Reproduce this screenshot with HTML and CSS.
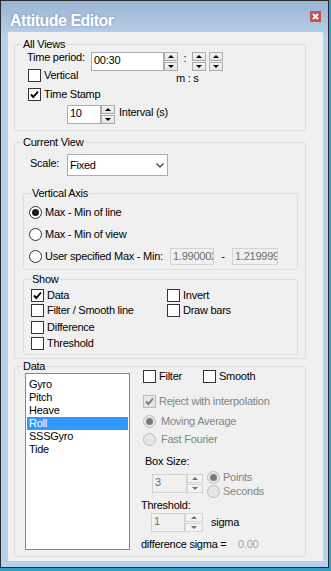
FILE: index.html
```html
<!DOCTYPE html>
<html lang="en">
<head>
  <meta charset="UTF-8" />
  <title>Attitude Editor</title>
  <link rel="stylesheet" href="styles.css">
</head>
<body>

  <div class="window">
    <div class="titlebar">
      <span class="title">Attitude Editor</span>
      <span class="close">
        <svg width="11" height="11" viewBox="0 0 11 11"><path d="M3 3L8 8M8 3L3 8" stroke="#fff" stroke-width="2"/></svg>
      </span>
    </div>

    <div class="client">

      <!-- All views -->
      <div class="group g-all">
        <div class="group-title">All Views</div>
        <div class="row r-period">
          <span class="lbl l-period">Time period:</span>
          <span class="edit e-period">00:30</span>
          <span class="spin"><i class="up"></i><i class="down"></i></span>
          <span class="colon">:</span>
          <span class="spin"><i class="up"></i><i class="down"></i></span>
          <span class="spin s-gap"><i class="up"></i><i class="down"></i></span>
        </div>
        <div class="row r-vertical">
          <label class="item i-vertical"><span class="cb"></span><span class="txt">Vertical</span></label>
          <span class="ms">m : s</span>
        </div>
        <div class="row r-stamp">
          <label class="item">
            <span class="cb"><svg width="11" height="11" viewBox="0 0 11 11"><path d="M2 5.5L4.3 8L9 2.5" fill="none" stroke-width="1.9"/></svg></span>
            <span class="txt">Time Stamp</span>
          </label>
        </div>
        <div class="row r-interval">
          <span class="edit e-interval">10</span>
          <span class="spin"><i class="up"></i><i class="down"></i></span>
          <span class="lbl l-interval">Interval (s)</span>
        </div>
      </div>

      <!-- Current view -->
      <div class="group g-current">
        <div class="group-title">Current View</div>
        <div class="row r-scale">
          <span class="lbl l-scale">Scale:</span>
          <span class="combo">
            <span>Fixed</span>
            <svg class="chev" width="8" height="5" viewBox="0 0 8 5"><path d="M0.5 0.5L4 4L7.5 0.5" fill="none" stroke="#444" stroke-width="1.3"/></svg>
          </span>
        </div>

        <div class="group g-axis">
          <div class="group-title">Vertical Axis</div>
          <div class="row r-ax1"><span class="rb on"></span><span class="txt">Max - Min of line</span></div>
          <div class="row r-ax2"><span class="rb"></span><span class="txt">Max - Min of view</span></div>
          <div class="row r-ax3">
            <span class="rb"></span><span class="txt l-user">User specified Max - Min:</span>
            <span class="edit dis e-min">1.990002</span>
            <span class="dash">-</span>
            <span class="edit dis e-max">1.219999</span>
          </div>
        </div>

        <div class="group g-show">
          <div class="group-title">Show</div>
          <div class="row r-sh1">
            <label class="item i-col">
              <span class="cb"><svg width="11" height="11" viewBox="0 0 11 11"><path d="M2 5.5L4.3 8L9 2.5" fill="none" stroke-width="1.9"/></svg></span>
              <span class="txt">Data</span>
            </label>
            <label class="item"><span class="cb"></span><span class="txt">Invert</span></label>
          </div>
          <div class="row r-sh2">
            <label class="item i-col"><span class="cb"></span><span class="txt">Filter / Smooth line</span></label>
            <label class="item"><span class="cb"></span><span class="txt">Draw bars</span></label>
          </div>
          <div class="row r-sh3">
            <label class="item"><span class="cb"></span><span class="txt">Difference</span></label>
          </div>
          <div class="row r-sh4">
            <label class="item"><span class="cb"></span><span class="txt">Threshold</span></label>
          </div>
        </div>
      </div>

      <!-- Data -->
      <div class="group g-data">
        <div class="group-title">Data</div>
        <div class="data-body">
          <div class="listbox">
            <div class="li">Gyro</div>
            <div class="li">Pitch</div>
            <div class="li">Heave</div>
            <div class="li sel">Roll</div>
            <div class="li">SSSGyro</div>
            <div class="li">Tide</div>
          </div>

          <div class="data-opts">
            <div class="row r-filter">
              <label class="item i-filter"><span class="cb"></span><span class="txt">Filter</span></label>
              <label class="item"><span class="cb"></span><span class="txt">Smooth</span></label>
            </div>
            <div class="row r-reject dis">
              <span class="cb"><svg width="11" height="11" viewBox="0 0 11 11"><path d="M2 5.5L4.3 8L9 2.5" fill="none" stroke-width="1.9"/></svg></span>
              <span class="txt">Reject with interpolation</span>
            </div>
            <div class="row r-moving dis"><span class="rb on"></span><span class="txt wide">Moving Average</span></div>
            <div class="row r-fourier dis"><span class="rb"></span><span class="txt wide">Fast Fourier</span></div>

            <div class="lbl l-box">Box Size:</div>
            <div class="row r-box">
              <span class="edit dis e-box">3</span>
              <span class="spin dis s-box"><i class="up"></i><i class="down"></i></span>
              <div class="units">
                <div class="row dis"><span class="rb on"></span><span class="txt">Points</span></div>
                <div class="row dis"><span class="rb"></span><span class="txt">Seconds</span></div>
              </div>
            </div>

            <div class="lbl l-thr">Threshold:</div>
            <div class="row r-thr">
              <span class="edit dis e-thr">1</span>
              <span class="spin dis s-thr"><i class="up"></i><i class="down"></i></span>
              <span class="lbl l-sigma">sigma</span>
            </div>
            <div class="row r-diff">
              <span class="l-diff">difference sigma =</span>
              <span class="val">0.00</span>
            </div>
          </div>
        </div>
      </div>

    </div>
  </div>

</body>
</html>
```

FILE: styles.css
```css
body {
  margin: 0;
  width: 331px;
  height: 571px;
  overflow: hidden;
  background-color: #2f9fc6;
  font-family: "Liberation Sans", Arial, sans-serif;
  font-size: 11px;
  letter-spacing: -0.25px;
  color: #000;
}

.window {
  width: 329px;
  height: 568px;
  box-sizing: border-box;
  border: 1px solid #2b2b2b;
  background: linear-gradient(#99b4d3, #b9d1ea 36px);
  padding: 0 5px 6px 7px;
  display: flex;
  flex-direction: column;
}

.titlebar {
  height: 31px;
  flex: none;
  display: flex;
  justify-content: space-between;
  align-items: flex-start;
}
.title {
  margin: 10px 0 0 2px;
  font-size: 16px;
  font-weight: bold;
  line-height: 20px;
  letter-spacing: -0.5px;
  color: #fff;
  text-shadow: 0 0 3px rgba(40, 60, 90, 0.35);
}
.close {
  width: 11px;
  height: 11px;
  margin: 10px 2px 0 0;
  background-color: #c75050;
}
.close svg {
  display: block;
}

.client {
  height: 529px;
  flex: none;
  box-sizing: border-box;
  background-color: #f0f0f0;
  padding: 12px 0 0 6px;
}

/* group boxes */
.group {
  border: 1px solid #dcdcdc;
  border-radius: 3px;
  box-sizing: border-box;
}
.group-title {
  width: fit-content;
  margin: -7px 0 0 7px;
  padding: 0 1px;
  background-color: #f0f0f0;
  line-height: 13px;
}
.g-all {
  width: 292px;
  height: 87px;
}
.g-current {
  width: 292px;
  height: 217px;
  margin-top: 11px;
}
.g-data {
  width: 292px;
  height: 191px;
  margin-top: 7px;
}
.g-axis {
  width: 275px;
  height: 77px;
  margin: 17px 0 0 8px;
}
.g-show {
  width: 275px;
  height: 76px;
  margin: 9px 0 0 8px;
}

/* common controls */
.row {
  display: flex;
  align-items: center;
}
.lbl,
.txt {
  line-height: 13px;
  white-space: nowrap;
}
.item {
  display: flex;
  align-items: center;
  height: 13px;
}
.txt {
  margin-left: 3px;
}
.txt.wide {
  margin-left: 5px;
}

.cb {
  width: 13px;
  height: 13px;
  flex: none;
  box-sizing: border-box;
  border: 1px solid #333;
  background-color: #fff;
}
.cb svg {
  display: block;
}
.cb path {
  stroke: #000;
}
.dis .cb {
  border-color: #bcbcbc;
  background-color: #e6e6e6;
}
.dis .cb path {
  stroke: #7a7a7a;
}

.rb {
  width: 13px;
  height: 13px;
  flex: none;
  box-sizing: border-box;
  border: 1px solid #333;
  border-radius: 50%;
  background-color: #fff;
  display: flex;
  align-items: center;
  justify-content: center;
}
.rb.on::after {
  content: "";
  width: 7px;
  height: 7px;
  border-radius: 50%;
  background-color: #1b1b1b;
}
.dis .rb {
  border-color: #bcbcbc;
  background-color: #e6e6e6;
}
.dis .rb.on::after {
  background-color: #7a7a7a;
}
.dis .txt {
  color: #838383;
}

.edit {
  height: 19px;
  box-sizing: border-box;
  border: 1px solid #abadb3;
  background-color: #fff;
  padding: 0 2px;
  line-height: 15px;
  white-space: nowrap;
  overflow: hidden;
  flex: none;
}
.edit.dis {
  border-color: #d2d2d2;
  background-color: #f0f0f0;
  color: #6d6d6d;
}

.spin {
  width: 14px;
  height: 19px;
  flex: none;
  display: flex;
  flex-direction: column;
  gap: 1px;
}
.spin i {
  flex: 1;
  box-sizing: border-box;
  border: 1px solid #acacac;
  background: linear-gradient(#f3f3f3, #e3e3e3);
  display: flex;
  align-items: center;
  justify-content: center;
}
.spin .up::after,
.spin .down::after {
  content: "";
  border-left: 3px solid transparent;
  border-right: 3px solid transparent;
}
.spin .up::after {
  border-bottom: 3px solid #000;
}
.spin .down::after {
  border-top: 3px solid #000;
}
.spin.dis i {
  border-color: #d5d5d5;
  background: #f4f4f4;
}
.spin.dis .up::after {
  border-bottom-color: #707070;
}
.spin.dis .down::after {
  border-top-color: #707070;
}

/* all views */
.r-period {
  height: 19px;
  margin-top: 1px;
  padding-left: 12px;
}
.l-period {
  width: 64px;
  align-self: flex-start;
  margin-top: -1px;
}
.e-period {
  width: 73px;
}
.colon {
  width: 14px;
  text-align: center;
  align-self: flex-start;
  line-height: 13px;
}
.s-gap {
  margin-left: 3px;
}
.r-vertical {
  height: 13px;
  margin-top: -2px;
  padding-left: 13px;
  align-items: flex-start;
}
.i-vertical {
  width: 148px;
}
.ms {
  margin-top: 3px;
  line-height: 13px;
}
.r-stamp {
  margin-top: 6px;
  padding-left: 13px;
}
.r-interval {
  height: 19px;
  margin-top: 4px;
  padding-left: 52px;
}
.e-interval {
  width: 34px;
}
.l-interval {
  margin-left: 4px;
  align-self: flex-start;
  margin-top: 1px;
}

/* current view */
.r-scale {
  height: 22px;
  margin-top: 5px;
  padding-left: 15px;
}
.l-scale {
  width: 37px;
  align-self: flex-start;
  margin-top: 3px;
}
.combo {
  width: 101px;
  height: 22px;
  box-sizing: border-box;
  border: 1px solid #abadb3;
  background-color: #fff;
  padding-left: 2px;
  line-height: 20px;
  display: flex;
  align-items: center;
}
.chev {
  margin: 1px 3px 0 auto;
}

.r-ax1 {
  margin-top: 6px;
  padding-left: 5px;
}
.r-ax2 {
  margin-top: 9px;
  padding-left: 5px;
}
.r-ax3 {
  height: 17px;
  margin-top: 7px;
  padding-left: 5px;
}
.l-user {
  width: 125px;
}
.e-min,
.e-max {
  height: 17px;
}
.e-min {
  width: 44px;
}
.e-max {
  width: 46px;
}
.dash {
  width: 18px;
  text-align: center;
  line-height: 13px;
}

.r-sh1 {
  margin-top: 3px;
  padding-left: 7px;
}
.r-sh2 {
  margin-top: 2px;
  padding-left: 7px;
}
.r-sh3 {
  margin-top: 4px;
  padding-left: 7px;
}
.r-sh4 {
  margin-top: 3px;
  padding-left: 7px;
}
.i-col {
  width: 136px;
}

/* data */
.data-body {
  display: flex;
  align-items: flex-start;
  padding-left: 10px;
}
.listbox {
  width: 105px;
  height: 177px;
  flex: none;
  box-sizing: border-box;
  border: 1px solid #828790;
  background-color: #fff;
  padding: 4px 1px 0;
}
.li {
  line-height: 13px;
  padding-left: 2px;
  white-space: nowrap;
}
.li.sel {
  background-color: #3399ff;
  color: #fff;
}

.data-opts {
  margin: -3px 0 0 11px;
}
.r-filter {
  padding-left: 2px;
}
.i-filter {
  width: 60px;
}
.r-reject {
  margin-top: 12px;
  padding-left: 2px;
}
.r-moving {
  margin-top: 7px;
  padding-left: 2px;
}
.r-fourier {
  margin-top: 5px;
  padding-left: 2px;
}
.l-box {
  margin-top: 9px;
  padding-left: 4px;
}
.r-box {
  margin-top: 3px;
  padding-left: 11px;
  align-items: flex-start;
}
.e-box {
  width: 35px;
  margin-top: 3px;
}
.s-box {
  width: 16px;
  margin-top: 3px;
}
.units {
  margin-left: 4px;
  display: flex;
  flex-direction: column;
  gap: 1px;
}
.l-thr {
  margin-top: 1px;
}
.r-thr {
  height: 19px;
  margin-top: 1px;
  padding-left: 10px;
}
.e-thr {
  width: 34px;
}
.s-thr {
  width: 18px;
}
.l-sigma {
  margin-left: 8px;
}
.r-diff {
  margin-top: 6px;
  line-height: 13px;
}
.l-diff {
  width: 97px;
  white-space: nowrap;
}
.val {
  color: #a3a3a3;
}
```
